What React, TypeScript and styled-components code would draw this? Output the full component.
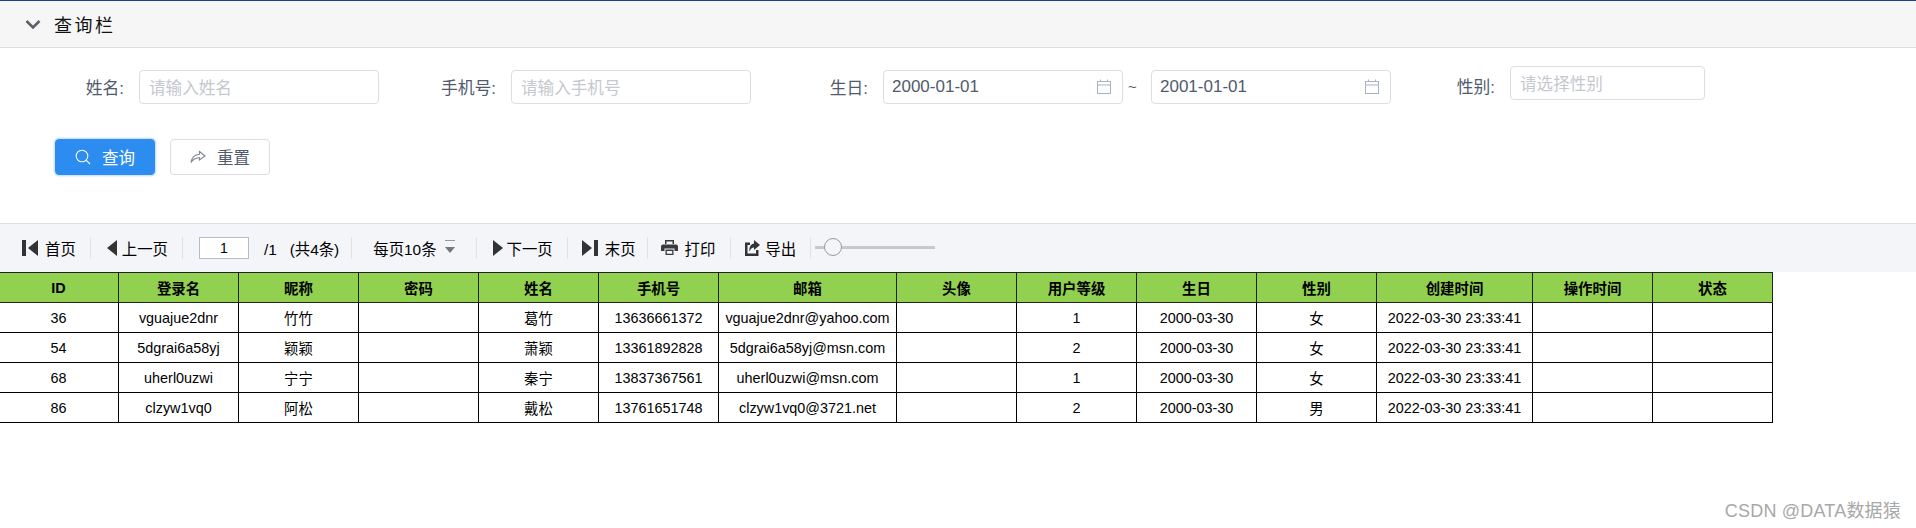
import { FC, ReactNode } from 'react';
import styled, { createGlobalStyle } from 'styled-components';

const GlobalStyle = createGlobalStyle`
    html, body {
        margin: 0;
        padding: 0;
        background: #fff;
        font-family: "Liberation Sans", "Noto Sans CJK SC", sans-serif;
    }
`;

const Page = styled.div`
    position: relative;
    width: 1916px;
    height: 528px;
    overflow: hidden;
    border-top: 1px solid #1c3f8f;
    box-sizing: border-box;
`;

const PanelHeader = styled.div`
    display: flex;
    align-items: center;
    height: 46px;
    padding-left: 25px;
    gap: 13px;
    background: #f6f6f6;
    border-bottom: 1px solid #dddddd;
`;

const PanelTitle = styled.span`
    font-size: 18px;
    letter-spacing: 2.5px;
    color: #111;
`;

const SearchForm = styled.div`
    height: 175px;
    padding-top: 22px;
    box-sizing: border-box;
`;

const FormRow = styled.div`
    display: flex;
    align-items: flex-start;
    height: 69px;
`;

const FormItem = styled.div<{ $top?: number }>`
    display: flex;
    align-items: center;
    margin-top: ${(p) => p.$top ?? 0}px;
`;

const Label = styled.label<{ $w: number; $drop?: number }>`
    width: ${(p) => p.$w}px;
    margin-top: ${(p) => p.$drop ?? 0}px;
    padding-right: 15px;
    box-sizing: border-box;
    text-align: right;
    font-size: 16.8px;
    color: #515a6e;
`;

const InputBox = styled.div<{ $w?: number }>`
    display: flex;
    align-items: center;
    justify-content: space-between;
    width: ${(p) => p.$w ?? 240}px;
    height: 34px;
    padding: 0 10px 1px 8px;
    box-sizing: border-box;
    border: 1px solid #dcdee2;
    border-radius: 4px;
    background: #fff;
    font-size: 17px;
    color: #515a6e;
`;

const Placeholder = styled.span`
    margin-left: 1px;
    font-size: 16.6px;
    color: #c5c8ce;
`;

const Tilde = styled.span`
    width: 28px;
    padding-left: 5px;
    box-sizing: border-box;
    font-size: 15px;
    line-height: 34px;
    color: #515a6e;
`;

const Buttons = styled.div`
    display: flex;
    align-items: center;
    gap: 15px;
    padding-left: 55px;
`;

const Button = styled.button<{ $primary?: boolean }>`
    display: flex;
    align-items: center;
    justify-content: center;
    gap: 11px;
    width: 100px;
    height: 36px;
    padding: 0;
    border-radius: 4px;
    font: inherit;
    font-size: 16.5px;
    color: ${(p) => (p.$primary ? '#fff' : '#515a6e')};
    background: ${(p) => (p.$primary ? '#2d8cf0' : '#fff')};
    border: 1px solid ${(p) => (p.$primary ? '#2d8cf0' : '#dcdee2')};
    box-shadow: ${(p) => (p.$primary ? '0 0 0 1.5px rgba(45, 140, 240, 0.22)' : 'none')};
`;

const Toolbar = styled.div`
    display: flex;
    align-items: center;
    height: 49px;
    padding: 0 0 1px 22px;
    box-sizing: border-box;
    background: #f4f5f8;
    border-top: 1px solid #dddddd;
    font-size: 15.4px;
    color: #000;
`;

const Tool = styled.span<{ $gap?: number }>`
    display: flex;
    align-items: center;
    gap: ${(p) => p.$gap ?? 7}px;
    white-space: pre;
`;

const Sep = styled.i<{ $l?: number; $r?: number }>`
    width: 1px;
    height: 22px;
    margin: 0 ${(p) => p.$r ?? 14}px 0 ${(p) => p.$l ?? 14}px;
    background: #dfe1e6;
`;

const PageInput = styled.div`
    width: 50px;
    height: 22px;
    margin-right: 15px;
    box-sizing: border-box;
    border: 1px solid #b4b9cc;
    background: #fff;
    text-align: center;
    font-size: 14px;
    line-height: 20px;
`;

const Slider = styled.div`
    position: relative;
    width: 120px;
    height: 3px;
    background: #c9c9c9;
`;

const Thumb = styled.span`
    position: absolute;
    left: 9px;
    top: -8px;
    width: 18px;
    height: 18px;
    box-sizing: border-box;
    border: 1px solid #9a9a9a;
    border-radius: 50%;
    background: #f4f5f8;
`;

const Table = styled.table`
    border-collapse: collapse;
    table-layout: fixed;
    width: 1773px;
    margin-left: -2px;
    font-size: 14.4px;
    color: #000;
`;

const Th = styled.th`
    height: 29px;
    padding: 0;
    border: 1px solid #222;
    background: #92d050;
    font-size: 14.4px;
    font-weight: 700;
    text-align: center;
`;

const Td = styled.td`
    height: 29px;
    padding: 0;
    border: 1px solid #000;
    text-align: center;
    white-space: nowrap;
`;

const Watermark = styled.div`
    position: absolute;
    right: 15px;
    bottom: 6px;
    font-size: 18px;
    color: #a8a8a8;
    letter-spacing: 0.2px;
`;

const columns = ['ID', '登录名', '昵称', '密码', '姓名', '手机号', '邮箱', '头像', '用户等级', '生日', '性别', '创建时间', '操作时间', '状态'];
const widths = [120, 120, 120, 120, 120, 120, 178, 120, 120, 120, 120, 156, 120, 120];

const rows = [
    ['36', 'vguajue2dnr', '竹竹', '', '葛竹', '13636661372', 'vguajue2dnr@yahoo.com', '', '1', '2000-03-30', '女', '2022-03-30 23:33:41', '', ''],
    ['54', '5dgrai6a58yj', '颖颖', '', '萧颖', '13361892828', '5dgrai6a58yj@msn.com', '', '2', '2000-03-30', '女', '2022-03-30 23:33:41', '', ''],
    ['68', 'uherl0uzwi', '宁宁', '', '秦宁', '13837367561', 'uherl0uzwi@msn.com', '', '1', '2000-03-30', '女', '2022-03-30 23:33:41', '', ''],
    ['86', 'clzyw1vq0', '阿松', '', '戴松', '13761651748', 'clzyw1vq0@3721.net', '', '2', '2000-03-30', '男', '2022-03-30 23:33:41', '', ''],
];

const Chevron = () => (
    <svg width="16" height="11" viewBox="0 0 16 11">
        <path d="M1.5 2 L8 8.5 L14.5 2" fill="none" stroke="#5c6068" strokeWidth="2.6" />
    </svg>
);

const CalendarIcon = () => (
    <svg width="16" height="16" viewBox="0 0 16 16" fill="none" stroke="#a9b1c6" strokeWidth="1">
        <rect x="1.5" y="2.5" width="13" height="12" />
        <path d="M1.5 6 H14.5 M4.5 0.5 V2.5 M11.5 0.5 V2.5" />
    </svg>
);

const SearchIcon = () => (
    <svg width="16" height="16" viewBox="0 0 16 16" fill="none" stroke="#fff" strokeWidth="1.1">
        <circle cx="7" cy="7" r="5.8" />
        <path d="M11 11.2 L15 15" />
    </svg>
);

const ResetIcon = () => (
    <svg width="16" height="14" viewBox="0 0 16 14" fill="none" stroke="#7d8493" strokeWidth="1.1">
        <path d="M9.5 1.5 L15 6 L9.5 10 V7.7 C6 7.7 3.2 9 1 12.5 C1.6 8 4.5 4.6 9.5 4.2 Z" />
    </svg>
);

const FirstIcon = () => (
    <svg width="16" height="16" viewBox="0 0 16 16" fill="#333">
        <rect x="0" y="0" width="4" height="16" />
        <path d="M16 0 V16 L6 8 Z" />
    </svg>
);

const PrevIcon = () => (
    <svg width="10" height="16" viewBox="0 0 10 16" fill="#333">
        <path d="M10 0 V16 L0 8 Z" />
    </svg>
);

const NextIcon = () => (
    <svg width="10" height="16" viewBox="0 0 10 16" fill="#333">
        <path d="M0 0 V16 L10 8 Z" />
    </svg>
);

const LastIcon = () => (
    <svg width="16" height="16" viewBox="0 0 16 16" fill="#333">
        <path d="M0 0 V16 L10 8 Z" />
        <rect x="12" y="0" width="4" height="16" />
    </svg>
);

const PrintIcon = () => (
    <svg width="17" height="15" viewBox="0 0 17 15" fill="#3a3a3a">
        <path d="M4 0 H13 V4 H11.5 V1.5 H5.5 V4 H4 Z" />
        <path d="M2 4.5 H15 A2 2 0 0 1 17 6.5 V11 H13.5 V8.5 H3.5 V11 H0 V6.5 A2 2 0 0 1 2 4.5 Z" />
        <path d="M4.5 9.5 H12.5 V15 H4.5 Z M5.8 11 V13.7 H11.2 V11 Z" fillRule="evenodd" />
    </svg>
);

const ExportIcon = () => (
    <svg width="15" height="16" viewBox="0 0 15 16" fill="#333">
        <path d="M0 2.5 H5 V5 H2.5 V13.5 H11 V10 H13.5 V16 H0 Z" />
        <path d="M9 0 L15 5 L9 10 V7.5 C7 7.5 5.6 8.6 4.5 11.5 C3.8 7 6 3.8 9 3.4 Z" />
    </svg>
);

const Caret = () => (
    <svg width="10" height="15" viewBox="0 0 10 15">
        <rect x="0" y="0" width="10" height="1" fill="#999" />
        <path d="M0 7 H10 L5 13 Z" fill="#777" />
    </svg>
);

const Field: FC<{ label: string; w: number; top?: number; drop?: number; children: ReactNode }> = (props) => (
    <FormItem $top={props.top}>
        <Label $w={props.w} $drop={props.drop}>{props.label}</Label>
        {props.children}
    </FormItem>
);

export default function App() {
    return (
        <Page>
            <GlobalStyle />
            <PanelHeader>
                <Chevron />
                <PanelTitle>查询栏</PanelTitle>
            </PanelHeader>

            <SearchForm>
                <FormRow>
                    <Field label="姓名:" w={139}>
                        <InputBox><Placeholder>请输入姓名</Placeholder></InputBox>
                    </Field>
                    <Field label="手机号:" w={132}>
                        <InputBox><Placeholder>请输入手机号</Placeholder></InputBox>
                    </Field>
                    <Field label="生日:" w={132}>
                        <InputBox>2000-01-01<CalendarIcon /></InputBox>
                    </Field>
                    <Tilde>~</Tilde>
                    <InputBox>2001-01-01<CalendarIcon /></InputBox>
                    <Field label="性别:" w={119} top={-4} drop={6}>
                        <InputBox $w={195}><Placeholder>请选择性别</Placeholder></InputBox>
                    </Field>
                </FormRow>
                <Buttons>
                    <Button $primary><SearchIcon />查询</Button>
                    <Button><ResetIcon />重置</Button>
                </Buttons>
            </SearchForm>

            <Toolbar>
                <Tool><FirstIcon />首页</Tool>
                <Sep $r={16} />
                <Tool $gap={5}><PrevIcon />上一页</Tool>
                <Sep $r={16} />
                <PageInput>1</PageInput>
                <Tool>{'/1   (共4条)'}</Tool>
                <Sep $l={12} $r={21} />
                <Tool $gap={8}>每页10条<Caret /></Tool>
                <Sep $l={21} $r={16} />
                <Tool $gap={4}><NextIcon />下一页</Tool>
                <Sep />
                <Tool><LastIcon />末页</Tool>
                <Sep $l={11} $r={13} />
                <Tool><PrintIcon />打印</Tool>
                <Sep $l={15} />
                <Tool $gap={5}><ExportIcon />导出</Tool>
                <Sep $r={4} />
                <Slider><Thumb /></Slider>
            </Toolbar>

            <Table>
                <colgroup>
                    {widths.map((w, i) => <col key={i} width={w} />)}
                </colgroup>
                <thead>
                    <tr>{columns.map((c) => <Th key={c}>{c}</Th>)}</tr>
                </thead>
                <tbody>
                    {rows.map((r) => (
                        <tr key={r[0]}>
                            {r.map((v, i) => <Td key={i}>{v}</Td>)}
                        </tr>
                    ))}
                </tbody>
            </Table>

            <Watermark>CSDN @DATA数据猿</Watermark>
        </Page>
    );
}
